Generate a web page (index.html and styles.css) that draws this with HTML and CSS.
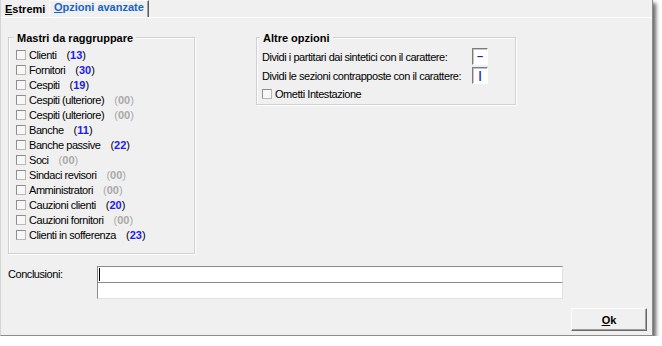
FILE: index.html
```html
<!doctype html>
<html>
<head>
<meta charset="utf-8">
<title>Opzioni avanzate</title>
<link rel="stylesheet" href="styles.css">
</head>
<body>
<div id="win">
	<div class="tabs">
		<div class="tab"><u>E</u>stremi</div>
		<div class="tab sel"><u>O</u>pzioni avanzate</div>
	</div>
	<div class="panel">
		<div class="top">
			<div class="group mastri">
				<div class="legend">Mastri da raggruppare</div>
				<ul class="checks">
					<li><i class="cb"></i><span class="lbl">Clienti</span><span class="n">(<b>13</b>)</span></li>
					<li><i class="cb"></i><span class="lbl">Fornitori</span><span class="n">(<b>30</b>)</span></li>
					<li><i class="cb"></i><span class="lbl">Cespiti</span><span class="n">(<b>19</b>)</span></li>
					<li><i class="cb"></i><span class="lbl">Cespiti (ulteriore)</span><span class="n z">(<b>00</b>)</span></li>
					<li><i class="cb"></i><span class="lbl">Cespiti (ulteriore)</span><span class="n z">(<b>00</b>)</span></li>
					<li><i class="cb"></i><span class="lbl">Banche</span><span class="n">(<b>11</b>)</span></li>
					<li><i class="cb"></i><span class="lbl">Banche passive</span><span class="n">(<b>22</b>)</span></li>
					<li><i class="cb"></i><span class="lbl">Soci</span><span class="n z">(<b>00</b>)</span></li>
					<li><i class="cb"></i><span class="lbl">Sindaci revisori</span><span class="n z">(<b>00</b>)</span></li>
					<li><i class="cb"></i><span class="lbl">Amministratori</span><span class="n z">(<b>00</b>)</span></li>
					<li><i class="cb"></i><span class="lbl">Cauzioni clienti</span><span class="n">(<b>20</b>)</span></li>
					<li><i class="cb"></i><span class="lbl">Cauzioni fornitori</span><span class="n z">(<b>00</b>)</span></li>
					<li><i class="cb"></i><span class="lbl">Clienti in sofferenza</span><span class="n">(<b>23</b>)</span></li>
				</ul>
			</div>
			<div class="group altre">
				<div class="legend">Altre opzioni</div>
				<div class="opts">
					<span class="lbl">Dividi i partitari dai sintetici con il carattere:</span>
					<span class="chr">&ndash;</span>
					<span class="lbl">Dividi le sezioni contrapposte con il carattere:</span>
					<span class="chr">|</span>
					<div class="row"><i class="cb"></i><span class="lbl">Ometti Intestazione</span></div>
				</div>
			</div>
		</div>
		<div class="concl">
			<span class="lbl">Conclusioni:</span>
			<div class="memo">
				<div class="line"><i class="caret"></i></div>
				<div class="line"></div>
			</div>
		</div>
		<div class="foot">
			<button class="btn"><u>O</u>k</button>
		</div>
	</div>
</div>
</body>
</html>
```

FILE: styles.css
```css
html,body{margin:0;padding:0;background:#fff;}
body{font-family:"Liberation Sans",Arial,sans-serif;font-size:11px;color:#000;}
ul,li{margin:0;padding:0;list-style:none;}
u{text-decoration:underline;text-underline-offset:1px;}

#win{width:653px;height:336px;box-sizing:border-box;background:#f0f0f0;border-left:1px solid #d4d4d4;border-right:1px solid #8c8c8c;border-bottom:1px solid #8c8c8c;box-shadow:3px 3px 4px rgba(0,0,0,.6);overflow:hidden;}

.tabs{display:flex;height:17px;border-bottom:1px solid #fff;}
.tab{width:48px;box-sizing:border-box;padding:3px 0 0 4px;line-height:13px;font-weight:bold;}
.tab.sel{width:100px;padding:0 0 0 4px;border-top:1px solid #fff;border-left:1px solid #fff;border-right:1px solid #5a5a5a;box-shadow:inset -1px 0 #a0a0a0;color:#1764c4;}

.panel{padding:19px 0 0 7px;}
.top{display:flex;gap:61px;}
.group{box-sizing:border-box;border:1px solid #d0d0d0;box-shadow:inset 1px 1px #fff,1px 1px #fff;}
.legend{width:fit-content;margin:-7px 0 0 -2px;padding:0 3px;line-height:14px;background:#f0f0f0;font-weight:bold;}
.mastri{width:187px;height:217px;padding:0 6px 0 7px;}
.altre{width:260px;height:68px;padding:0 6px 0 5px;}

.lbl{letter-spacing:-0.45px;white-space:nowrap;}
.cb{display:inline-block;width:10px;height:10px;box-sizing:border-box;border:1px solid #8e8e8e;border-right-color:#b8b8b8;border-bottom-color:#b8b8b8;background:#f7f7f7;margin-right:3px;}

.checks{margin-top:2px;}
.checks li{height:15px;display:flex;align-items:center;}
.n{margin-left:10px;color:#000;}
.n b{color:#1a1af5;}
.n.z,.n.z b{color:#a9a9a9;}

.opts{display:grid;grid-template-columns:210px 16px;grid-template-rows:17px 17px 15px;row-gap:2px;margin-top:3px;align-items:center;}
.chr{height:17px;box-sizing:border-box;border:1px solid #7c7c7c;border-right-color:#fff;border-bottom-color:#fff;box-shadow:inset 1px 1px #c4c4c4;background:#fff;color:#1a1ad0;font-weight:bold;text-align:center;line-height:14px;}
.opts .row{grid-column:1 / 3;display:flex;align-items:center;}

.concl{display:flex;margin-top:12px;}
.concl .lbl{width:89px;line-height:17px;}
.memo{width:466px;}
.line{height:16px;box-sizing:border-box;background:#fff;border-top:1px solid #8a8a8a;border-left:1px solid #8a8a8a;border-right:1px solid #e2e2e2;position:relative;}
.line + .line{height:17px;border-bottom:1px solid #e2e2e2;}
.caret{position:absolute;left:1px;top:1px;width:1px;height:13px;background:#000;}

.foot{display:flex;justify-content:flex-end;padding-right:5px;margin-top:9px;}
.btn{width:76px;height:23px;padding:0;font:bold 11px "Liberation Sans",Arial,sans-serif;color:#000;background:#f0f0f0;border:1px solid #fff;border-right-color:#696969;border-bottom-color:#696969;box-shadow:inset -1px -1px #a0a0a0;}
```
